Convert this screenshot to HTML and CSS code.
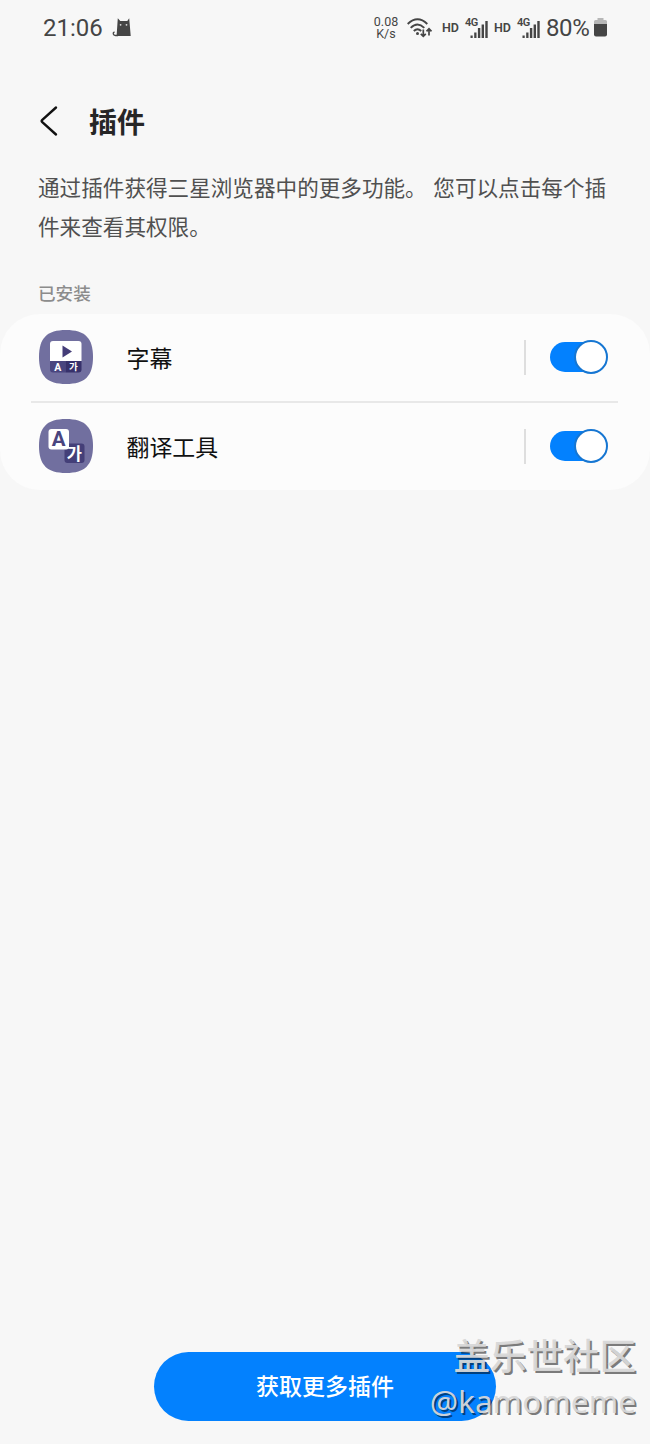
FILE: index.html
```html
<!DOCTYPE html>
<html lang="zh-CN">
<head>
<meta charset="utf-8">
<title>插件</title>
<link rel="stylesheet" href="styles.css">
</head>
<body>
<div class="screen">
  <header class="status">
    <span class="clock">21:06</span>
    <svg class="cat" width="20" height="19" viewBox="0 0 20 19"><path d="M4.600 18 5.400 6 5.800.3 8.300 3h7L17.200.3l.5 5.700 1 12Z" fill="#454545"/><path d="M6 17.500H3.500C.8 17.500.5 14.500 2.500 14" fill="none" stroke="#454545" stroke-width="1.300"/><circle cx="8.600" cy="6.800" r=".9" fill="#ddd"/><circle cx="14.500" cy="6.800" r=".9" fill="#ddd"/></svg>
    <span class="speed"><span>0.08</span><span>K/s</span></span>
    <svg class="wifi" width="26" height="20" viewBox="0 0 26 20" fill="none" stroke="#454545"><path d="M.7 6Q10.500-3.500 20.300 6M3.700 9.800Q10.500 3 17.300 9.800M6.800 13Q10.500 9.300 14.200 13" stroke-width="1.900"/><circle cx="10.500" cy="15.400" r="1.500" fill="#454545" stroke="none"/><path d="M16.300 11.500v6.700M13.800 15.800l2.500 2.500 2.500-2.500M22 17.500v-6.700M19.500 13.300 22 10.700l2.500 2.600" stroke-width="1.700"/></svg>
    <span class="hd hd-first">HD</span>
    <span class="cell"><span class="gen">4G</span><svg width="22" height="22" viewBox="0 0 22 22" fill="#454545"><path d="M4.500 18.500h2.200V21H4.500zM8.200 15.500h2.300V21H8.200zM11.900 11h2.400v10h-2.400zM15.600 7.500H18V21h-2.400zM19.300 4h2.400v17h-2.400z"/></svg></span>
    <span class="hd hd-second">HD</span>
    <span class="cell"><span class="gen">4G</span><svg width="22" height="22" viewBox="0 0 22 22" fill="#454545"><path d="M4.500 18.500h2.200V21H4.500zM8.200 15.500h2.300V21H8.200zM11.900 11h2.400v10h-2.400zM15.600 7.500H18V21h-2.400zM19.300 4h2.400v17h-2.400z"/></svg></span>
    <span class="percent">80%</span>
    <svg class="battery" width="13" height="19" viewBox="0 0 13 19"><path d="M3.500 0h6v2h2Q13 2 13 3.500V7H0V3.500Q0 2 1.500 2h2Z" fill="#b7b7b7"/><path d="M0 6h13v10.500q0 2-2 2H2q-2 0-2-2Z" fill="#454545"/></svg>
  </header>

  <div class="titlebar">
    <svg width="20" height="32" viewBox="0 0 20 32"><path d="M17 2.500 3.300 14.800q-1.200 1.200 0 2.400L17 29.500" fill="none" stroke="#111" stroke-width="2.400" stroke-linecap="round" stroke-linejoin="round"/></svg>
    <h1>插件</h1>
  </div>

  <p class="intro">通过插件获得三星浏览器中的更多功能。 您可以点击每个插件来查看其权限。</p>
  <h2 class="section">已安装</h2>

  <main class="card">
    <div class="row">
      <svg class="icon" width="54" height="54" viewBox="0 0 54 54"><path d="M27 0C46 0 54 8 54 27S46 54 27 54 0 46 0 27 8 0 27 0Z" fill="#716f9f"/><path d="M11 31V14q0-3 3-3h25.500q3 0 3 3v17Z" fill="#fff"/><path d="M11 31h15.500v11.500H14q-3 0-3-3Z" fill="#49457f"/><path d="M26.500 31h16v8.500q0 3-3 3h-13Z" fill="#37316b"/><path d="M23.500 15.500v12l9.500-6Z" fill="#443d78"/><text class="glyph" x="15.200" y="40.800" font-size="10.500">A</text><text class="glyph hangul" x="30" y="40.200" font-size="9.500">가</text></svg>
      <span class="name">字幕</span>
      <span class="rule"></span>
      <span class="toggle"><span class="knob"></span></span>
    </div>
    <div class="divider"></div>
    <div class="row">
      <svg class="icon" width="54" height="54" viewBox="0 0 54 54"><path d="M27 0C46 0 54 8 54 27S46 54 27 54 0 46 0 27 8 0 27 0Z" fill="#716f9f"/><rect x="25.500" y="24.500" width="20" height="19.500" rx="3" fill="#443f78"/><rect x="9.500" y="10" width="20.500" height="20.500" rx="3" fill="#fff"/><text class="glyph dark" x="12.800" y="27.300" font-size="20.500">A</text><text class="glyph hangul" x="27.700" y="40.500" font-size="16.500">가</text></svg>
      <span class="name">翻译工具</span>
      <span class="rule"></span>
      <span class="toggle"><span class="knob"></span></span>
    </div>
  </main>

  <footer class="bottom">
    <button class="more">获取更多插件</button>
    <div class="watermark"><span class="community">盖乐世社区</span><span class="user">@kamomeme</span></div>
  </footer>
</div>
</body>
</html>
```

FILE: styles.css
```css
* { box-sizing: border-box; }
body { margin: 0; background: #f7f7f7; font-family: "Noto Sans CJK SC", sans-serif; }
.screen { width: 650px; height: 1444px; display: flex; flex-direction: column; overflow: hidden; }

.status { height: 55px; padding-left: 43px; display: flex; align-items: center; color: #454545; font-family: Roboto, sans-serif; flex: none; }
.status svg { display: block; flex: none; }
.clock { font-size: 24px; width: 61px; }
.cat { margin-left: 8px; }
.speed { margin-left: 241px; width: 26px; display: flex; flex-direction: column; align-items: center; font-size: 12.5px; line-height: 12px; }
.speed span { height: 12px; }
.wifi { margin-left: 8px; }
.hd { font-size: 12.5px; font-weight: 600; width: 18px; }
.hd-first { margin-left: 9px; }
.hd-second { margin-left: 5px; }
.cell { margin-left: 6px; width: 23px; height: 22px; position: relative; }
.gen { position: absolute; left: -1px; top: 0; font-size: 11px; line-height: 11px; font-weight: 600; letter-spacing: -.5px; }
.percent { margin-left: 5px; width: 45px; font-size: 24px; letter-spacing: -.4px; }
.battery { margin-left: 3px; }

.titlebar { height: 112px; padding: 50px 0 0 39px; display: flex; align-items: flex-start; gap: 30px; flex: none; }
.titlebar h1 { margin: -4px 0 0; font-size: 28px; line-height: 40px; font-weight: 600; color: #262626; }
.intro { margin: 0; width: 612px; padding-left: 38px; font-size: 21.6px; line-height: 39px; word-spacing: 1.8px; color: #505050; }
.section { margin: 35px 0 0 38px; font-size: 17.6px; line-height: 25px; font-weight: 500; color: #8c8c8c; }

.card { margin-top: 9px; height: 176px; background: #fcfcfc; border-radius: 40px; display: flex; flex-direction: column; flex: none; }
.row { height: 87px; display: flex; align-items: center; padding: 0 42px 0 39px; }
.icon { margin-top: -2px; }
.divider { height: 2px; margin: 0 32px 0 31px; background: #e8e8e8; }
.name { flex: 1; margin: -1px 0 0 33.6px; font-size: 22.9px; line-height: 34px; color: #111; }
.rule { width: 2px; height: 35px; background: #dedede; margin-right: 24px; }
.toggle { width: 58px; height: 30px; margin-top: -1px; display: flex; align-items: center; justify-content: flex-end; border-radius: 15px; background: linear-gradient(#0381fe, #0381fe) left / 42px 30px no-repeat; }
.knob { width: 34px; height: 34px; flex: none; border-radius: 50%; border: 2px solid #1676d2; background: #fff; }
.glyph { fill: #fff; font-family: Roboto, sans-serif; font-weight: 700; }
.glyph.hangul { font-family: "Noto Sans CJK KR", sans-serif; }
.glyph.dark { fill: #49457f; }

.bottom { margin-top: auto; padding: 0 0 23px 154px; position: relative; }
.more { display: block; width: 342px; height: 69px; border: 0; border-radius: 35px; background: #0381fe; color: #fff; font: 500 23px/67px "Noto Sans CJK SC", sans-serif; padding: 0 0 2px; }
.watermark { position: absolute; right: 14px; bottom: 20px; display: flex; flex-direction: column; align-items: flex-end; color: rgba(216,216,216,.94); text-shadow: 2px 2px 0 rgba(0,0,0,.5); white-space: nowrap; }
.community { font-size: 36.5px; line-height: 46px; font-weight: 500; }
.user { font-family: "Noto Sans", sans-serif; font-size: 31.6px; line-height: 46px; }
```
